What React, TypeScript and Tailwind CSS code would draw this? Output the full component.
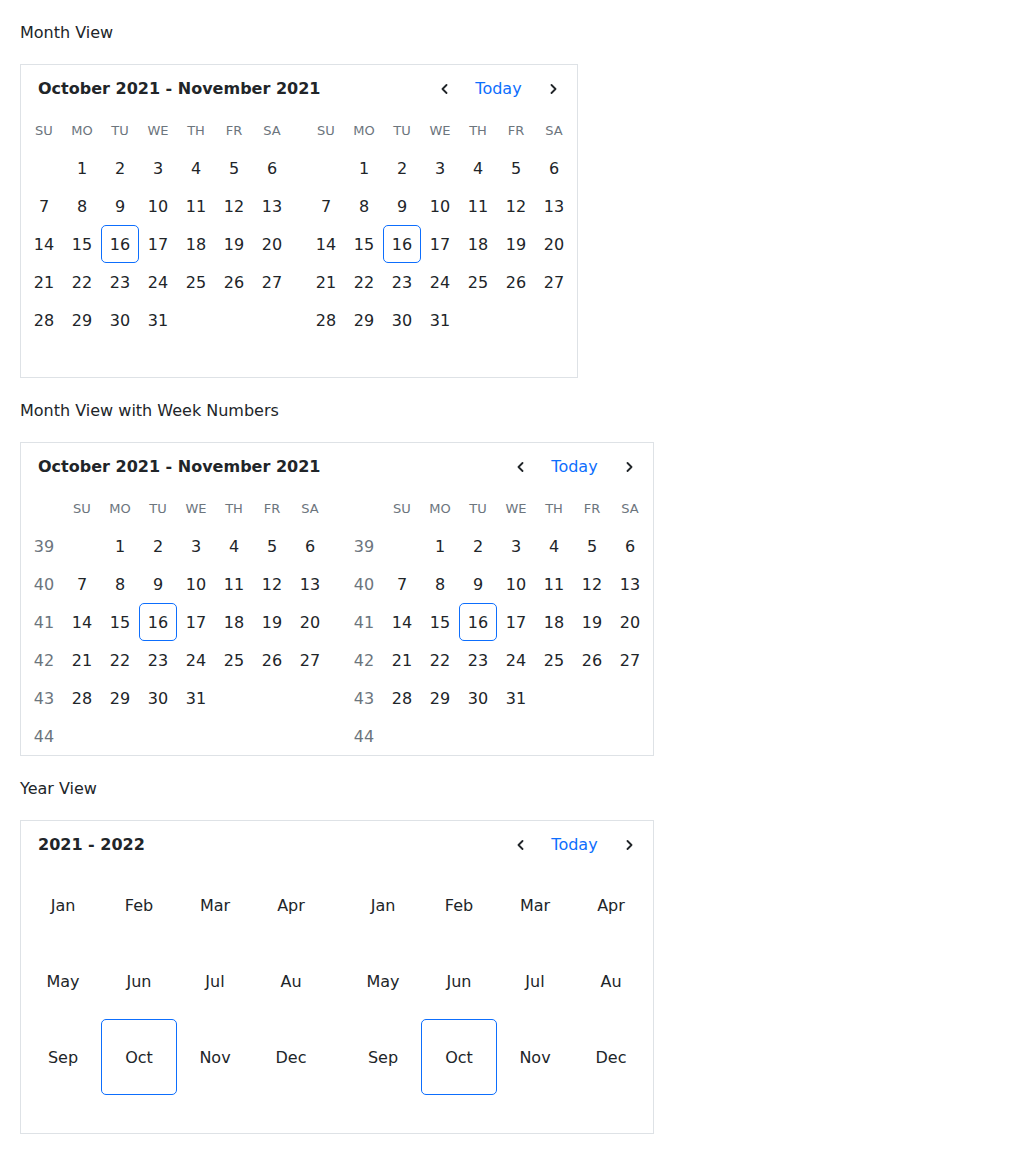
import React from "react";

const FONT = { fontFamily: '"DejaVu Sans", "Liberation Sans", sans-serif' };

const DAYS = ["SU", "MO", "TU", "WE", "TH", "FR", "SA"];
const MONTHS = ["Jan", "Feb", "Mar", "Apr", "May", "Jun", "Jul", "Au", "Sep", "Oct", "Nov", "Dec"];

function buildWeeks(): (number | null)[][] {
  const cells: (number | null)[] = [null];
  for (let d = 1; d <= 31; d++) cells.push(d);
  while (cells.length < 42) cells.push(null);
  const weeks: (number | null)[][] = [];
  for (let i = 0; i < 6; i++) weeks.push(cells.slice(i * 7, i * 7 + 7));
  return weeks;
}

function ChevronLeft() {
  return (
    <svg width="7" height="10" viewBox="0 0 7 10" fill="none">
      <path d="M5.5 1 L1.5 5 L5.5 9" stroke="#212529" strokeWidth="1.8" strokeLinecap="round" strokeLinejoin="round" />
    </svg>
  );
}

function ChevronRight() {
  return (
    <svg width="7" height="10" viewBox="0 0 7 10" fill="none">
      <path d="M1.5 1 L5.5 5 L1.5 9" stroke="#212529" strokeWidth="1.8" strokeLinecap="round" strokeLinejoin="round" />
    </svg>
  );
}

function Header({ title }: { title: string }) {
  return (
    <div className="flex h-[46px] items-center justify-between pl-[13px] pr-[1px] pt-[2px]">
      <div className="text-[16px] font-bold text-[#212529]">{title}</div>
      <div className="flex items-center">
        <button className="flex h-[38px] w-[38px] items-center justify-center">
          <ChevronLeft />
        </button>
        <button className="flex h-[38px] w-[71px] items-center justify-center text-[16px] text-[#0d6efd]">Today</button>
        <button className="flex h-[38px] w-[38px] items-center justify-center">
          <ChevronRight />
        </button>
      </div>
    </div>
  );
}

function MonthGrid({ weekNumbers }: { weekNumbers: boolean }) {
  const weeks = buildWeeks();
  return (
    <div className="flex flex-col">
      <div className="flex">
        {weekNumbers && <div className="h-[38px] w-[38px]" />}
        {DAYS.map((d) => (
          <div key={d} className="flex h-[38px] w-[38px] items-center justify-center pt-[2px] text-[13px] text-[#6c757d]">
            {d}
          </div>
        ))}
      </div>
      {weeks.map((w, i) => (
        <div key={i} className="flex">
          {weekNumbers && (
            <div className="flex h-[38px] w-[38px] items-center justify-center pt-[2px] text-[16px] text-[#6c757d]">{39 + i}</div>
          )}
          {w.map((d, j) => (
            <div
              key={j}
              className={
                d === 16
                  ? "flex h-[38px] w-[38px] items-center justify-center rounded-[5px] border border-[#0d6efd] pt-[2px] text-[16px] text-[#212529]"
                  : "flex h-[38px] w-[38px] items-center justify-center pt-[2px] text-[16px] text-[#212529]"
              }
            >
              {d ?? ""}
            </div>
          ))}
        </div>
      ))}
    </div>
  );
}

function YearGrid() {
  return (
    <div className="flex flex-col pb-[38px]">
      <div className="grid grid-cols-4">
        {MONTHS.map((m) => (
          <div
            key={m}
            className={
              m === "Oct"
                ? "flex h-[76px] w-[76px] items-center justify-center rounded-[5px] border border-[#0d6efd] pt-[2px] text-[16px] text-[#212529]"
                : "flex h-[76px] w-[76px] items-center justify-center pt-[2px] text-[16px] text-[#212529]"
            }
          >
            {m}
          </div>
        ))}
      </div>
    </div>
  );
}

function Card({ title, children }: { title: string; children: React.ReactNode }) {
  return (
    <div className="self-start border border-[#dee2e6] bg-white px-[4px]">
      <Header title={title} />
      <div className="flex gap-[16px]">{children}</div>
    </div>
  );
}

function Label({ children }: { children: React.ReactNode }) {
  return <div className="h-[24px] pt-[1px] text-[16px] leading-[24px] text-[#212529]">{children}</div>;
}

export default function App() {
  return (
    <div className="flex flex-col gap-[20px] bg-white p-[20px] text-[#212529]" style={FONT}>
      <Label>Month View</Label>
      <Card title="October 2021 - November 2021">
        <MonthGrid weekNumbers={false} />
        <MonthGrid weekNumbers={false} />
      </Card>
      <Label>Month View with Week Numbers</Label>
      <Card title="October 2021 - November 2021">
        <MonthGrid weekNumbers={true} />
        <MonthGrid weekNumbers={true} />
      </Card>
      <Label>Year View</Label>
      <Card title="2021 - 2022">
        <YearGrid />
        <YearGrid />
      </Card>
    </div>
  );
}
